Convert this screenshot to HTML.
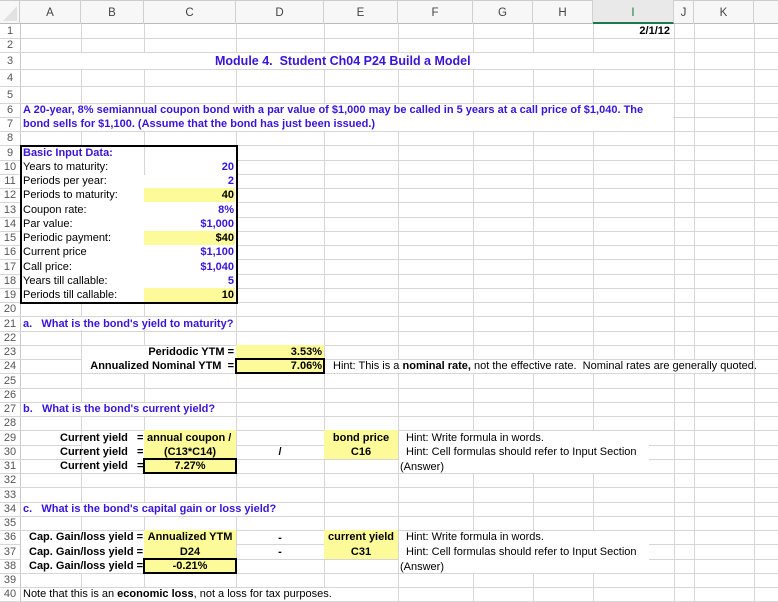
<!DOCTYPE html>
<html><head><meta charset="utf-8"><style>
*{margin:0;padding:0;box-sizing:border-box}
body{width:778px;height:602px;overflow:hidden;background:#fff;position:relative;font-family:"Liberation Sans",Arial,sans-serif;font-size:11px;color:#000}
div{position:absolute}
.v{top:24px;bottom:0;width:1px;background:#d6d6d6}
.h{left:0;right:0;height:1px;background:#d6d6d6}
.hd{top:0;height:24px;line-height:26px;text-align:center;color:#444;font-size:11.5px;border-right:1px solid #d0d0d0}
.rn{left:0;width:20px;text-align:center;color:#555;font-size:11px;line-height:14px}
.t{white-space:nowrap;line-height:14px;height:14px}
.b{font-weight:bold}
.bl{color:#3a14d8}
.y{background:#fdfb99}
.w{background:#fff}
.bx{border:2px solid #000}
</style></head><body>
<!-- header -->
<div style="left:0;top:0;width:778px;height:24px;background:#f7f7f7;border-top:1px solid #ccc;border-bottom:1px solid #bbb"></div>
<div style="left:0;top:0;width:20px;height:24px;border-right:1px solid #ccc"><svg width="20" height="24"><polygon points="17,6 17,21 3,21" fill="#e2e2e2"/></svg></div>
<div class="hd" style="left:20px;width:61px">A</div>
<div class="hd" style="left:81px;width:63px">B</div>
<div class="hd" style="left:144px;width:92px">C</div>
<div class="hd" style="left:236px;width:88px">D</div>
<div class="hd" style="left:324px;width:74px">E</div>
<div class="hd" style="left:398px;width:75px">F</div>
<div class="hd" style="left:473px;width:60px">G</div>
<div class="hd" style="left:533px;width:60px">H</div>
<div class="hd" style="left:593px;width:81px;background:#e9e9e9;color:#1a7a4a;border-bottom:2px solid #1a7a4a;height:24px">I</div>
<div class="hd" style="left:674px;width:20px">J</div>
<div class="hd" style="left:694px;width:60px">K</div>
<div style="left:20px;top:24px;width:1px;bottom:0;background:#c8c8c8"></div>
<!-- verticals -->
<div class="v" style="left:81px"></div><div class="v" style="left:144px"></div><div class="v" style="left:236px"></div><div class="v" style="left:324px"></div><div class="v" style="left:398px"></div><div class="v" style="left:473px"></div><div class="v" style="left:533px"></div><div class="v" style="left:593px"></div><div class="v" style="left:674px"></div><div class="v" style="left:694px"></div><div class="v" style="left:754px"></div>
<!-- horizontals -->
<div class="h" style="top:38px"></div><div class="h" style="top:52px"></div><div class="h" style="top:69px"></div><div class="h" style="top:86px"></div><div class="h" style="top:103px"></div><div class="h" style="top:117px"></div><div class="h" style="top:131px"></div><div class="h" style="top:145px"></div><div class="h" style="top:160px"></div><div class="h" style="top:174px"></div><div class="h" style="top:188px"></div><div class="h" style="top:202px"></div><div class="h" style="top:217px"></div><div class="h" style="top:231px"></div><div class="h" style="top:245px"></div><div class="h" style="top:259px"></div><div class="h" style="top:274px"></div><div class="h" style="top:288px"></div><div class="h" style="top:302px"></div><div class="h" style="top:316px"></div><div class="h" style="top:331px"></div><div class="h" style="top:345px"></div><div class="h" style="top:359px"></div><div class="h" style="top:373px"></div><div class="h" style="top:388px"></div><div class="h" style="top:402px"></div><div class="h" style="top:416px"></div><div class="h" style="top:430px"></div><div class="h" style="top:445px"></div><div class="h" style="top:459px"></div><div class="h" style="top:473px"></div><div class="h" style="top:487px"></div><div class="h" style="top:502px"></div><div class="h" style="top:516px"></div><div class="h" style="top:530px"></div><div class="h" style="top:544px"></div><div class="h" style="top:559px"></div><div class="h" style="top:573px"></div><div class="h" style="top:587px"></div><div class="h" style="top:601px"></div>
<!-- row numbers -->
<div class="rn" style="top:24px">1</div><div class="rn" style="top:38px">2</div><div class="rn" style="top:54px">3</div><div class="rn" style="top:71px">4</div><div class="rn" style="top:88px">5</div>
<div class="rn" style="top:103px">6</div><div class="rn" style="top:117px">7</div><div class="rn" style="top:131px">8</div><div class="rn" style="top:146px">9</div><div class="rn" style="top:160px">10</div><div class="rn" style="top:174px">11</div><div class="rn" style="top:188px">12</div><div class="rn" style="top:203px">13</div><div class="rn" style="top:217px">14</div><div class="rn" style="top:231px">15</div><div class="rn" style="top:245px">16</div><div class="rn" style="top:260px">17</div><div class="rn" style="top:274px">18</div><div class="rn" style="top:288px">19</div><div class="rn" style="top:302px">20</div><div class="rn" style="top:317px">21</div><div class="rn" style="top:331px">22</div><div class="rn" style="top:345px">23</div><div class="rn" style="top:359px">24</div><div class="rn" style="top:374px">25</div><div class="rn" style="top:388px">26</div><div class="rn" style="top:402px">27</div><div class="rn" style="top:416px">28</div><div class="rn" style="top:431px">29</div><div class="rn" style="top:445px">30</div><div class="rn" style="top:459px">31</div><div class="rn" style="top:473px">32</div><div class="rn" style="top:488px">33</div><div class="rn" style="top:502px">34</div><div class="rn" style="top:516px">35</div><div class="rn" style="top:530px">36</div><div class="rn" style="top:545px">37</div><div class="rn" style="top:559px">38</div><div class="rn" style="top:573px">39</div><div class="rn" style="top:587px">40</div>

<!-- row 1 -->
<div class="t b" style="left:593px;width:80px;top:24px;text-align:right;padding-right:3px">2/1/12</div>
<!-- title row 3 -->
<div class="w" style="left:21px;top:53px;width:652px;height:16px"></div>
<div class="t b bl" style="left:215px;top:54px;font-size:12.5px">Module 4.&nbsp; Student Ch04 P24 Build a Model</div>
<!-- rows 6-7 -->
<div class="w" style="left:21px;top:104px;width:652px;height:27px"></div>
<div class="t b bl" style="left:23px;top:103px">A 20-year, 8% semiannual coupon bond with a par value of $1,000 may be called in 5 years at a call price of $1,040. The</div>
<div class="t b bl" style="left:23px;top:117px">bond sells for $1,100. (Assume that the bond has just been issued.)</div>
<!-- input box -->
<div class="w bx" style="left:20px;top:145px;width:218px;height:159px"></div>
<div class="y" style="left:144px;top:188px;width:91px;height:14px"></div>
<div class="y" style="left:144px;top:231px;width:91px;height:14px"></div>
<div class="y" style="left:144px;top:288px;width:91px;height:14px"></div>
<div style="left:144px;top:147px;width:1px;height:28px;background:#d6d6d6"></div>
<div class="t b bl" style="left:23px;top:146px">Basic Input Data:</div>
<div class="t" style="left:23px;top:160px">Years to maturity:</div>
<div class="t" style="left:23px;top:174px">Periods per year:</div>
<div class="t" style="left:23px;top:188px">Periods to maturity:</div>
<div class="t" style="left:23px;top:203px">Coupon rate:</div>
<div class="t" style="left:23px;top:217px">Par value:</div>
<div class="t" style="left:23px;top:231px">Periodic payment:</div>
<div class="t" style="left:23px;top:245px">Current price</div>
<div class="t" style="left:23px;top:260px">Call price:</div>
<div class="t" style="left:23px;top:274px">Years till callable:</div>
<div class="t" style="left:23px;top:288px">Periods till callable:</div>
<div class="t b bl" style="left:144px;width:90px;text-align:right;top:160px">20</div>
<div class="t b bl" style="left:144px;width:90px;text-align:right;top:174px">2</div>
<div class="t b" style="left:144px;width:90px;text-align:right;top:188px">40</div>
<div class="t b bl" style="left:144px;width:90px;text-align:right;top:203px">8%</div>
<div class="t b bl" style="left:144px;width:90px;text-align:right;top:217px">$1,000</div>
<div class="t b" style="left:144px;width:90px;text-align:right;top:231px">$40</div>
<div class="t b bl" style="left:144px;width:90px;text-align:right;top:245px">$1,100</div>
<div class="t b bl" style="left:144px;width:90px;text-align:right;top:260px">$1,040</div>
<div class="t b bl" style="left:144px;width:90px;text-align:right;top:274px">5</div>
<div class="t b" style="left:144px;width:90px;text-align:right;top:288px">10</div>
<!-- a -->
<div class="w" style="left:21px;top:317px;width:215px;height:13px"></div>
<div class="t b bl" style="left:23px;top:317px">a.&nbsp;&nbsp; What is the bond's yield to maturity?</div>
<div class="w" style="left:82px;top:346px;width:154px;height:27px"></div>
<div class="t b" style="left:82px;width:152px;text-align:right;top:345px">Peridodic YTM =</div>
<div class="t b" style="left:82px;width:152px;text-align:right;top:359px">Annualized Nominal YTM &nbsp;=</div>
<div class="y" style="left:236px;top:345px;width:88px;height:14px"></div>
<div class="t b" style="left:236px;width:86px;text-align:right;top:345px">3.53%</div>
<div class="y bx" style="left:235px;top:358px;width:90px;height:16px"></div>
<div class="t b" style="left:236px;width:86px;text-align:right;top:359px">7.06%</div>
<div class="w" style="left:326px;top:360px;width:427px;height:13px"></div>
<div class="t" style="left:333px;top:359px">Hint: This is a <b>nominal rate,</b> not the effective rate.&nbsp; Nominal rates are generally quoted.</div>
<!-- b -->
<div class="w" style="left:21px;top:403px;width:215px;height:13px"></div>
<div class="t b bl" style="left:23px;top:402px">b.&nbsp;&nbsp; What is the bond's current yield?</div>
<div class="w" style="left:82px;top:431px;width:62px;height:42px"></div>
<div class="t b" style="left:60px;top:431px">Current yield&nbsp;&nbsp; =</div>
<div class="t b" style="left:60px;top:445px">Current yield&nbsp;&nbsp; =</div>
<div class="t b" style="left:60px;top:459px">Current yield&nbsp;&nbsp; =</div>
<div class="y" style="left:144px;top:430px;width:92px;height:29px"></div>
<div class="t b" style="left:147px;top:431px">annual coupon /</div>
<div class="t b" style="left:144px;width:92px;text-align:center;top:445px">(C13*C14)</div>
<div class="y bx" style="left:143px;top:458px;width:94px;height:16px"></div>
<div class="t b" style="left:144px;width:92px;text-align:center;top:459px">7.27%</div>
<div class="t b" style="left:236px;width:88px;text-align:center;top:445px">/</div>
<div class="y" style="left:324px;top:430px;width:74px;height:29px"></div>
<div class="t b" style="left:324px;width:74px;text-align:center;top:431px">bond price</div>
<div class="t b" style="left:324px;width:74px;text-align:center;top:445px">C16</div>
<div class="w" style="left:399px;top:431px;width:250px;height:42px"></div>
<div class="t" style="left:406px;top:431px">Hint: Write formula in words.</div>
<div class="t" style="left:406px;top:445px">Hint: Cell formulas should refer to Input Section</div>
<div class="t" style="left:400px;top:460px">(Answer)</div>
<!-- c -->
<div class="w" style="left:21px;top:503px;width:260px;height:13px"></div>
<div class="t b bl" style="left:23px;top:502px">c.&nbsp;&nbsp; What is the bond's capital gain or loss yield?</div>
<div class="w" style="left:21px;top:531px;width:123px;height:42px"></div>
<div class="t b" style="left:29px;top:530px">Cap. Gain/loss yield =</div>
<div class="t b" style="left:29px;top:545px">Cap. Gain/loss yield =</div>
<div class="t b" style="left:29px;top:559px">Cap. Gain/loss yield =</div>
<div class="y" style="left:144px;top:530px;width:92px;height:29px"></div>
<div class="t b" style="left:144px;width:92px;text-align:center;top:530px">Annualized YTM</div>
<div class="t b" style="left:144px;width:92px;text-align:center;top:545px">D24</div>
<div class="y bx" style="left:143px;top:558px;width:94px;height:16px"></div>
<div class="t b" style="left:144px;width:92px;text-align:center;top:559px">-0.21%</div>
<div class="t b" style="left:236px;width:88px;text-align:center;top:531px">-</div>
<div class="t b" style="left:236px;width:88px;text-align:center;top:545px">-</div>
<div class="y" style="left:324px;top:530px;width:74px;height:29px"></div>
<div class="t b" style="left:324px;width:74px;text-align:center;top:530px">current yield</div>
<div class="t b" style="left:324px;width:74px;text-align:center;top:545px">C31</div>
<div class="w" style="left:399px;top:531px;width:250px;height:42px"></div>
<div class="t" style="left:406px;top:530px">Hint: Write formula in words.</div>
<div class="t" style="left:406px;top:545px">Hint: Cell formulas should refer to Input Section</div>
<div class="t" style="left:400px;top:560px">(Answer)</div>
<!-- 40 -->
<div class="w" style="left:21px;top:588px;width:320px;height:13px"></div>
<div class="t" style="left:23px;top:587px">Note that this is an <b>economic loss</b>, not a loss for tax purposes.</div>
</body></html>
